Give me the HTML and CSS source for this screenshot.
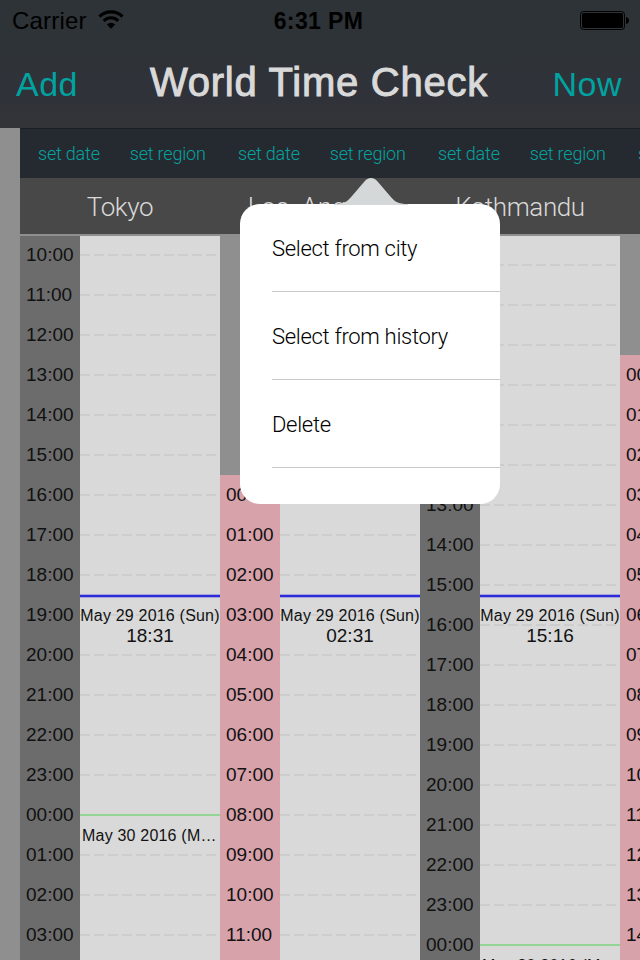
FILE: index.html
```
<!DOCTYPE html>
<html lang="en">
<head>
    <meta charset="UTF-8">
    <meta name="viewport" content="width=device-width, initial-scale=1.0">
    <title>World Time Check</title>
    <link rel="stylesheet" href="styles.css">
</head>
<body>
    <div class="app">
        <header class="header">
            <div class="status-bar">
                <div class="carrier">
                    <span>Carrier</span>
                    <svg class="wifi" width="26" height="20" viewBox="0 0 26 20">
                        <path d="M1.5 6.5 A16.5 16.5 0 0 1 24.5 6.5" fill="none" stroke="#000" stroke-width="3.2"/>
                        <path d="M5.7 10.8 A10.5 10.5 0 0 1 20.3 10.8" fill="none" stroke="#000" stroke-width="3"/>
                        <path d="M13 18.8 L8.8 14.4 A6 6 0 0 1 17.2 14.4 Z"/>
                    </svg>
                </div>
                <div class="clock">6:31 PM</div>
                <svg class="battery" width="50" height="20" viewBox="0 0 50 20">
                    <rect x="0.5" y="0.5" width="44" height="18" rx="3" fill="none" stroke="#000"/>
                    <rect x="2" y="2" width="41" height="15" rx="1.5"/>
                    <path d="M46 6 Q49 6.5 49 9.5 Q49 12.500 46 13 Z"/>
                </svg>
            </div>
            <nav class="nav-bar">
                <a class="nav-button">Add</a>
                <h1 class="title">World Time Check</h1>
                <a class="nav-button now">Now</a>
            </nav>
        </header>

        <main class="content">
            <div class="toolbar">
                <div class="tools"><a>set date</a><a>set region</a></div>
                <div class="tools"><a>set date</a><a>set region</a></div>
                <div class="tools"><a>set date</a><a>set region</a></div>
                <div class="tools"><a>set date</a><a>set region</a></div>
            </div>
            <div class="cities">
                <div class="city">Tokyo</div>
                <div class="city spaced">Los Angeles</div>
                <div class="city">Kathmandu</div>
                <div class="city"></div>
            </div>
            <div class="timeline" id="timeline"></div>
        </main>

        <div class="popover">
            <svg class="arrow" width="74" height="27" viewBox="0 0 74 27">
                <path d="M0 27 V26 C10 26 13 24 18 18 L30 4 C34 -1.300 40 -1.300 44 4 L56 18 C61 24 64 26 74 26 V27 Z"/>
            </svg>
            <ul class="menu">
                <li>Select from city</li>
                <li>Select from history</li>
                <li>Delete</li>
            </ul>
        </div>
    </div>

    <script>
        // top: where the first hour row starts, relative to the timeline
        const columns = [
            { top: -1, start: 10, color: 'gray', date: 'May 29 2016 (Sun)', time: '18:31' },
            { top: 239, start: 0, color: 'pink', date: 'May 29 2016 (Sun)', time: '02:31' },
            { top: -31, start: 6, color: 'gray', date: 'May 29 2016 (Sun)', time: '15:16' },
            { top: 119, start: 0, color: 'pink', date: 'May 29 2016 (Sun)', time: '05:31' }
        ];
        const line = 358;
        const timeline = document.getElementById('timeline');

        columns.forEach(col => {
            const column = document.createElement('div');
            column.className = 'column';
            column.style.marginTop = col.top + 'px';

            for (let i = 0; i * 40 + col.top < 724; i++) {
                const hour = (col.start + i) % 24;
                const midnight = hour === 0 && i > 0;
                column.innerHTML += `
                    <div class="row">
                        <div class="hour ${col.color}">${String(hour).padStart(2, '0')}:00</div>
                        <div class="slot ${midnight ? 'midnight' : ''}">
                            ${midnight ? '<div class="next-day">May 30 2016 (Mon)</div>' : ''}
                        </div>
                    </div>`;
            }

            column.innerHTML += `
                <div class="now-line" style="top: ${line - col.top}px">
                    <div class="now-date">${col.date}</div>
                    <div class="now-time">${col.time}</div>
                </div>`;
            timeline.appendChild(column);
        });
    </script>
</body>
</html>
```
FILE: styles.css
```
* {
    box-sizing: border-box;
}
body {
    margin: 0;
    font-family: "Liberation Sans", Arial, sans-serif;
    background: #8f8f8f;
}
.app {
    position: relative;
    width: 640px;
    height: 960px;
    overflow: hidden;
}
.header {
    height: 128px;
    background: linear-gradient(#2d3337 0, #2e3337 55px, #30323a 95px, #323437 127px);
}
.status-bar {
    display: grid;
    grid-template-columns: 1fr auto 1fr;
    align-items: center;
    height: 40px;
    padding: 1px 10px 0 12px;
    font-size: 24px;
    color: #000;
}
.carrier {
    display: flex;
    align-items: center;
    gap: 11px;
    letter-spacing: 0.2px;
}
.wifi {
    margin-top: -1px;
}
.clock {
    padding-right: 5px;
    padding-top: 1px;
    font-weight: bold;
    font-size: 23px;
    letter-spacing: 0.4px;
}
.battery {
    justify-self: end;
}
.nav-bar {
    display: grid;
    grid-template-columns: 1fr auto 1fr;
    align-items: center;
    height: 85px;
    padding: 0 18px 0 16px;
}
.nav-button {
    padding-top: 3px;
    font-size: 34px;
    letter-spacing: 0.5px;
    color: #00a3a0;
}
.now {
    text-align: right;
}
.title {
    margin: 0;
    font-size: 40px;
    font-weight: normal;
    letter-spacing: 0.75px;
    color: #d9d9d9;
    -webkit-text-stroke: 1px #d9d9d9;
}
.content {
    width: 800px;
    margin-left: 20px;
}
.toolbar {
    display: flex;
    height: 50px;
    padding-bottom: 1px;
    background: #252a31;
    border-top: 1px solid #1b1e22;
}
.tools {
    display: flex;
    align-items: center;
    gap: 30px;
    width: 200px;
    padding-left: 18px;
    font-family: Roboto, sans-serif;
    font-weight: 300;
    font-size: 18px;
    letter-spacing: -0.2px;
    color: #06a29f;
}
.cities {
    display: flex;
    height: 56px;
    background: #484848;
}
.city {
    width: 200px;
    text-align: center;
    line-height: 59px;
    font-family: Roboto, sans-serif;
    font-weight: 300;
    font-size: 26px;
    letter-spacing: -0.4px;
    color: #d9d9d9;
}
.spaced {
    letter-spacing: 0;
    word-spacing: 6px;
}
.timeline {
    display: flex;
    height: 724px;
    margin-top: 2px;
    overflow: hidden;
    align-items: flex-start;
}
.column {
    position: relative;
    width: 200px;
}
.row {
    display: flex;
    height: 40px;
}
.hour {
    width: 60px;
    padding-left: 6px;
    line-height: 40px;
    font-size: 19px;
    color: #111;
}
.gray {
    background: #6c6c6c;
}
.pink {
    background: #d8a2ab;
}
.slot {
    width: 140px;
    padding-top: 20px;
    background: repeating-linear-gradient(to right, #cdcdcd 0, #cdcdcd 10px, #d9d9d9 10px, #d9d9d9 14px) 0 19px / 140px 2px no-repeat #d9d9d9;
}
.midnight {
    background: linear-gradient(#94d494, #94d494) 0 19px / 140px 2px no-repeat #d9d9d9;
}
.next-day {
    position: relative;
    z-index: 1;
    padding: 0 2px;
    line-height: 41px;
    font-size: 16px;
    letter-spacing: 0.2px;
    white-space: nowrap;
    overflow: hidden;
    text-overflow: ellipsis;
    color: #111;
}
.now-line {
    position: absolute;
    left: 60px;
    width: 140px;
    padding-top: 12px;
    background: linear-gradient(#a5a5d9 0, #a5a5d9 1px, #2c2cdb 1px, #2c2cdb 3px, #a5a5d9 3px) 0 0 / 140px 4px no-repeat;
    text-align: center;
    white-space: nowrap;
    color: #111;
}
.now-date {
    line-height: 20px;
    font-size: 16px;
    letter-spacing: 0.2px;
}
.now-time {
    line-height: 20px;
    font-size: 19px;
}
.popover {
    position: absolute;
    left: 240px;
    top: 178px;
    width: 260px;
}
.arrow {
    display: block;
    margin-left: 94px;
    margin-bottom: -1px;
    fill: #d5d8d8;
}
.menu {
    height: 300px;
    margin: 0;
    padding: 0 0 0 32px;
    list-style: none;
    background: #fff;
    border-radius: 20px;
}
.menu li {
    height: 88px;
    border-bottom: 1px solid #c8c8c8;
    line-height: 89px;
    font-family: Roboto, sans-serif;
    font-weight: 300;
    font-size: 22px;
    letter-spacing: -0.3px;
    color: #000;
}
```
